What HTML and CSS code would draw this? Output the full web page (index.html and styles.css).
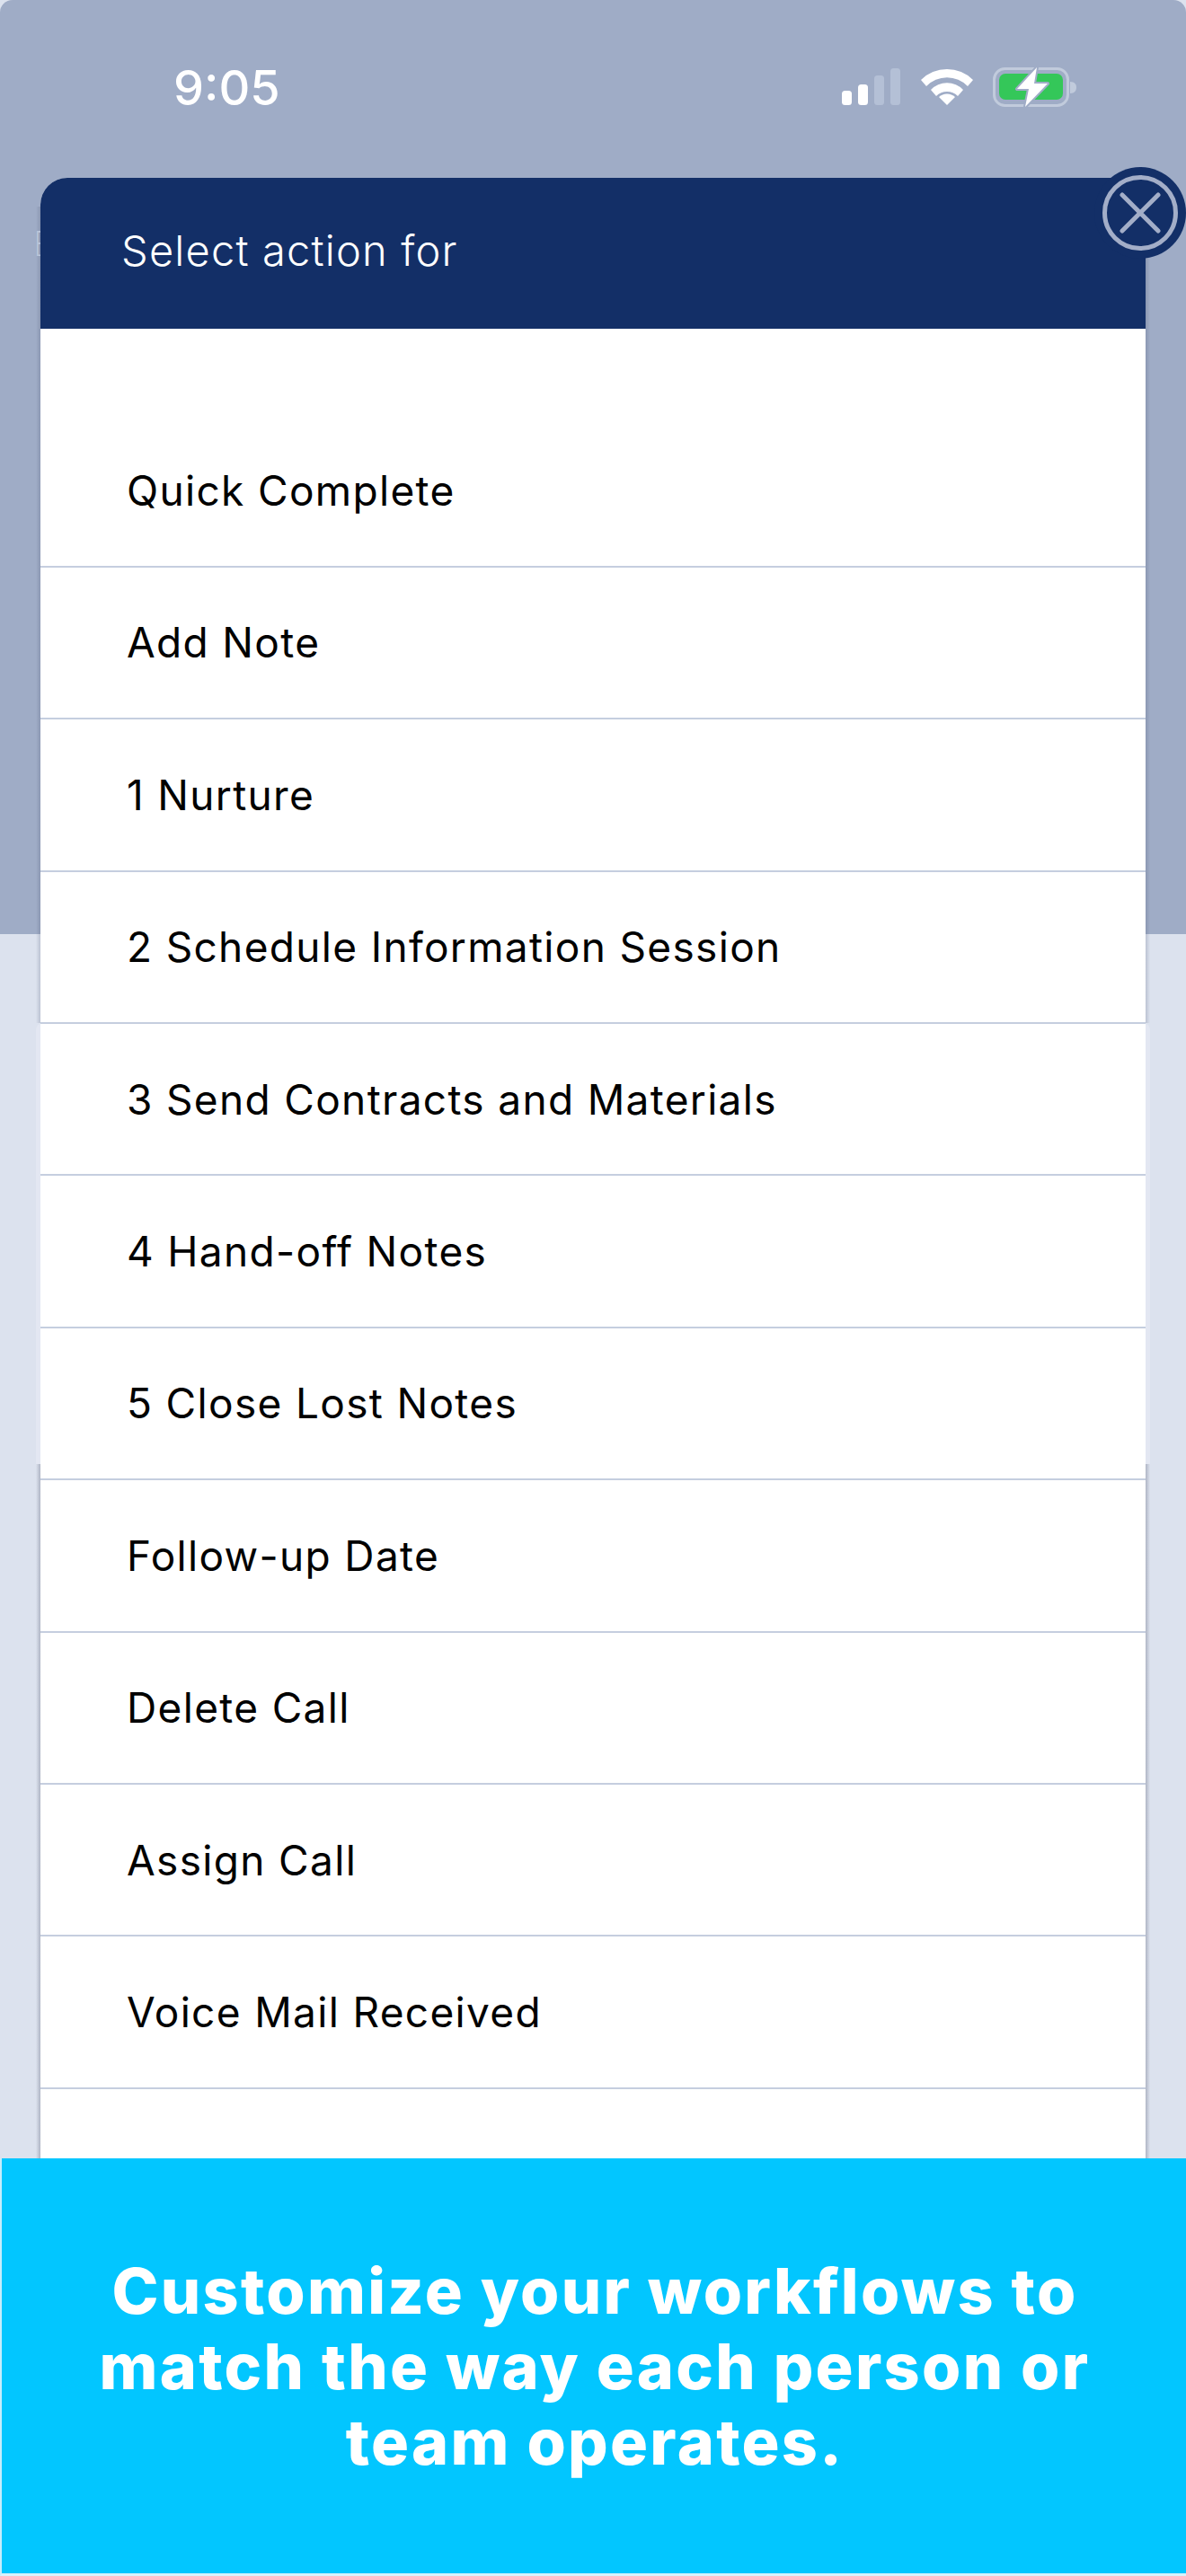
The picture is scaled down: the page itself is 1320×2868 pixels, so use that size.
FILE: index.html
```html
<!DOCTYPE html>
<html lang="en">
<head>
<meta charset="utf-8">
<title>Select action</title>
<link rel="stylesheet" href="styles.css">
</head>
<body>
<div class="screen">
  <div class="dim"></div>
  <div class="lower"></div>
  <div class="edge edge-upper"></div>
  <div class="edge edge-lower"></div>
  <span class="ghost">E</span>
  <div class="status">
    <span class="time">9:05</span>
    <div class="status-icons">
      <svg class="signal" width="66" height="42" viewBox="0 0 66 42"><rect x="0" y="25" width="11" height="16" rx="3.5" fill="#fff"/><rect x="18" y="18" width="11" height="23" rx="3.5" fill="#fff"/><rect x="36" y="8" width="11" height="33" rx="3.5" fill="#b4c0d6"/><rect x="54" y="0" width="11" height="41" rx="3.5" fill="#b4c0d6"/></svg>
      <svg class="wifi" width="58" height="42" viewBox="0 0 58 42"><path d="M0 14 A41 41 0 0 1 58 14 L52 21 A32 32 0 0 0 6 21 Z" fill="#fff"/><path d="M11 25 A25 25 0 0 1 47 25 L41 32 A17 17 0 0 0 17 32 Z" fill="#fff"/><path d="M20 33 A13 13 0 0 1 38 33 L29 42 Z" fill="#fff"/></svg>
      <svg class="battery" width="94" height="46" viewBox="0 0 94 46"><rect x="1.500" y="2.500" width="82" height="41" rx="12" fill="none" stroke="#c1cbdc" stroke-width="3"/><rect x="7" y="8" width="71" height="29" rx="7" fill="#34c759"/><path d="M86 17 C91 17 93 20 93 23 C93 27 91 30 86 30 Z" fill="#c1cbdc"/><path d="M49 1 L27 25 L40 25 L36 45 L61 19 L46 19 Z" fill="#fff" stroke="#9facc6" stroke-width="4" stroke-linejoin="round" paint-order="stroke"/></svg>
    </div>
  </div>
  <section class="modal">
    <header class="modal-head">Select action for</header>
    <ul class="actions">
      <li>Quick Complete</li>
      <li>Add Note</li>
      <li>1 Nurture</li>
      <li>2 Schedule Information Session</li>
      <li>3 Send Contracts and Materials</li>
      <li>4 Hand-off Notes</li>
      <li>5 Close Lost Notes</li>
      <li>Follow-up Date</li>
      <li>Delete Call</li>
      <li>Assign Call</li>
      <li>Voice Mail Received</li>
    </ul>
  </section>
  <button class="close" aria-label="Close">
    <svg width="84" height="84" viewBox="0 0 84 84"><circle cx="42" cy="42" r="39.500" fill="none" stroke="#a3aec8" stroke-width="5"/><path d="M22 22 L62 62 M62 22 L22 62" stroke="#a3aec8" stroke-width="5" stroke-linecap="round"/></svg>
  </button>
  <footer class="banner">Customize your workflows to match the way each person or team operates.</footer>
</div>
</body>
</html>
```
FILE: styles.css
```css
* { box-sizing: border-box; }
html, body { margin: 0; padding: 0; }
body { width: 1320px; height: 2868px; overflow: hidden; background: #fff; font-family: "Inter", "Liberation Sans", sans-serif; }
.screen { position: relative; width: 1320px; height: 2868px; overflow: hidden; background: #dce2ee; }
.dim { position: absolute; left: 0; top: 0; width: 1320px; height: 1040px; background: #9facc6; border-radius: 14px 14px 0 0; }
.lower { position: absolute; left: 40px; width: 1240px; top: 1139px; height: 491px; background: #e3e7f2; border-radius: 8px 8px 0 0; }
.edge { position: absolute; left: 40px; width: 1240px; background: linear-gradient(to right, transparent 0, var(--shade) 5px, transparent 5px, transparent 1235px, var(--shade) 1235px, transparent 100%); }
.edge-upper { --shade: rgba(70, 80, 110, 0.22); top: 230px; height: 909px; }
.edge-lower { --shade: rgba(70, 75, 100, 0.3); top: 1630px; height: 773px; }
.ghost { position: absolute; left: 37px; top: 249px; color: #b9c4d9; font-size: 38px; line-height: 44px; font-weight: 200; }
.status { position: relative; height: 198px; padding: 68px 0 0 193px; display: flex; justify-content: space-between; color: #fff; }
.time { font-size: 54px; font-weight: 500; line-height: 60px; }
.status-icons { display: flex; align-items: flex-start; gap: 22px; padding: 6px 121px 0 0; }
.signal { margin-top: 2px; }
.wifi { margin-top: 1px; }
.modal { position: relative; margin-left: 45px; width: 1230px; background: #fff; border-radius: 30px 30px 0 0; height: 2300px; }
.modal-head { height: 168px; padding: 53px 0 0 90px; background: #132f67; color: #fff; border-radius: 30px 30px 0 0; font-size: 47px; line-height: 56px; font-weight: 300; letter-spacing: 1.2px; }
.actions { list-style: none; margin: 0; padding: 96.400px 0 0; }
.actions li { display: flex; align-items: center; height: 169.400px; padding-left: 96px; border-bottom: 2px solid #c5cedf; color: #000; font-size: 46px; line-height: 56px; font-weight: 400; letter-spacing: 1.33px; }
.close { position: absolute; left: 1218px; top: 186px; width: 102px; height: 102px; border-radius: 50%; background: #132f67; border: 0; padding: 9px; display: flex; }
.banner { position: absolute; left: 0; top: 2403px; width: 1320px; height: 465px; padding: 106px 60px 0 62px; background: #02c6ff; border-left: 2px solid #c8edfb; border-bottom: 3px solid #d8f2fc; color: #fff; font-size: 70px; line-height: 84px; font-weight: 800; letter-spacing: 2.3px; text-align: center; }
```
